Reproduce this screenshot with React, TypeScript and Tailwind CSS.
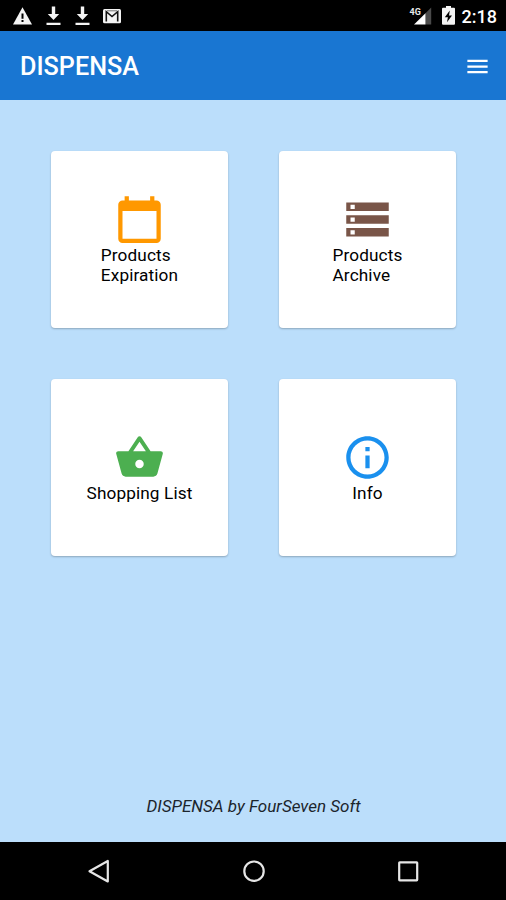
import type { ReactNode } from "react";
import { MdCalendarToday, MdStorage, MdShoppingBasket, MdOutlineInfo, MdMenu } from "react-icons/md";

function Download() {
  return (
    <svg className="ml-[14px] h-[20px] w-[15px]" viewBox="0 0 15 20" fill="#f4f4f4">
      <path d="M5.8 0.5h3.4v7.5h4L7.5 14 1.8 8h4zM0.5 16.7h14v2.2H0.5z" />
    </svg>
  );
}

function StatusBar() {
  return (
    <div className="flex h-[31px] shrink-0 items-start bg-black pt-[6px] pl-[13px] text-white">
      <svg className="h-[20px] w-[19px]" viewBox="0 0 19 20">
        <path d="M9.5 1.2 19 18.5H0z" fill="#f4f4f4" />
        <path d="M8.5 7.5h2v5.2h-2zM8.5 14h2v2.1h-2z" fill="#000" />
      </svg>
      <Download />
      <Download />
      <svg className="ml-[13px] h-[20px] w-[18px]" viewBox="0 0 18 20">
        <rect x="0" y="3" width="18" height="14.2" rx="1.5" fill="#f4f4f4" />
        <path d="M3.3 15.5V5.7L9 10.5l5.7-4.8v9.8" fill="none" stroke="#111" strokeWidth="1.6" />
        <path d="M4 4.8h10" stroke="#555" strokeWidth="0.8" />
      </svg>
      <div className="ml-auto flex items-start pr-[9px]">
        <svg className="h-[20px] w-[23px]" viewBox="0 0 23 20">
          <path d="M22.2 1.5v17H16.5V7.2z" fill="#4a4a4a" />
          <path d="M16.5 7.2v11.3H5z" fill="#fff" />
          <text x="0.6" y="9.2" fontFamily="Roboto, sans-serif" fontSize="9" fontWeight="700" fill="#e8e8e8" stroke="#000" strokeWidth="2" paintOrder="stroke">4G</text>
        </svg>
        <svg className="ml-[10px] h-[20px] w-[13px]" viewBox="0 0 13 20">
          <path d="M4 0h5v1.8h3q1 0 1 1v15q0 1-1 1H1q-1 0-1-1v-15q0-1 1-1h3z" fill="#f4f4f4" />
          <path d="M7.8 4.5 2.8 11.3h3.1L5 16.3l5-6.8H7z" fill="#000" />
        </svg>
        <span className="ml-[7px] text-[18px] leading-[21px] font-medium">2:18</span>
      </div>
    </div>
  );
}

function Card({ icon, children }: { icon: ReactNode; children: ReactNode }) {
  return (
    <button className="flex h-[177px] w-[177px] flex-col items-center justify-center rounded-[4px] bg-white pl-px text-left text-[17.2px] leading-[20px] tracking-[0.12px] text-black shadow-[0_1px_2px_rgba(0,0,0,0.25)]">
      {icon}
      <span>{children}</span>
    </button>
  );
}

export default function App() {
  return (
    <div className="flex h-[900px] w-[506px] flex-col overflow-hidden bg-[#bbdefb] font-['Roboto',sans-serif]">
      <StatusBar />
      <header className="flex h-[69px] shrink-0 items-center justify-between bg-[#1976d2] pt-[2px] pr-[15px] pl-[20px] text-white">
        <h1 className="text-[25.2px] leading-[30px] font-medium">DISPENSA</h1>
        <MdMenu size={27} />
      </header>
      <main className="flex flex-1 flex-col items-center pt-[51px]">
        <div className="grid grid-cols-2 gap-x-[51px] gap-y-[51px]">
          <Card icon={<MdCalendarToday size={51} color="#ff9800" />}>
            Products
            <br />
            Expiration
          </Card>
          <Card icon={<MdStorage size={51} color="#795548" />}>
            Products
            <br />
            Archive
          </Card>
          <Card icon={<MdShoppingBasket size={51} color="#4caf50" />}>Shopping List</Card>
          <Card icon={<MdOutlineInfo size={51} color="#1a90ee" />}>Info</Card>
        </div>
        <p className="mt-auto mb-[26px] pl-px text-[17px] leading-[20px] text-[#1c252c] italic">DISPENSA by FourSeven Soft</p>
      </main>
      <nav className="flex h-[58px] shrink-0 items-center bg-black pl-[87px]">
        <svg className="h-[26px] w-[24px]" viewBox="0 0 24 26" fill="none" stroke="#e6e6e6" strokeWidth="2.2" strokeLinejoin="round">
          <path d="M20.8 3v20.5L2.5 13.2z" />
        </svg>
        <svg className="ml-[131px] h-[26px] w-[24px]" viewBox="0 0 24 26" fill="none" stroke="#e6e6e6" strokeWidth="2.2">
          <circle cx="12" cy="13.2" r="9.7" />
        </svg>
        <svg className="ml-[130px] h-[26px] w-[24px]" viewBox="0 0 24 26" fill="none" stroke="#e6e6e6" strokeWidth="2.2" strokeLinejoin="round">
          <rect x="3.2" y="4.3" width="18" height="18" rx="0.5" />
        </svg>
      </nav>
    </div>
  );
}
